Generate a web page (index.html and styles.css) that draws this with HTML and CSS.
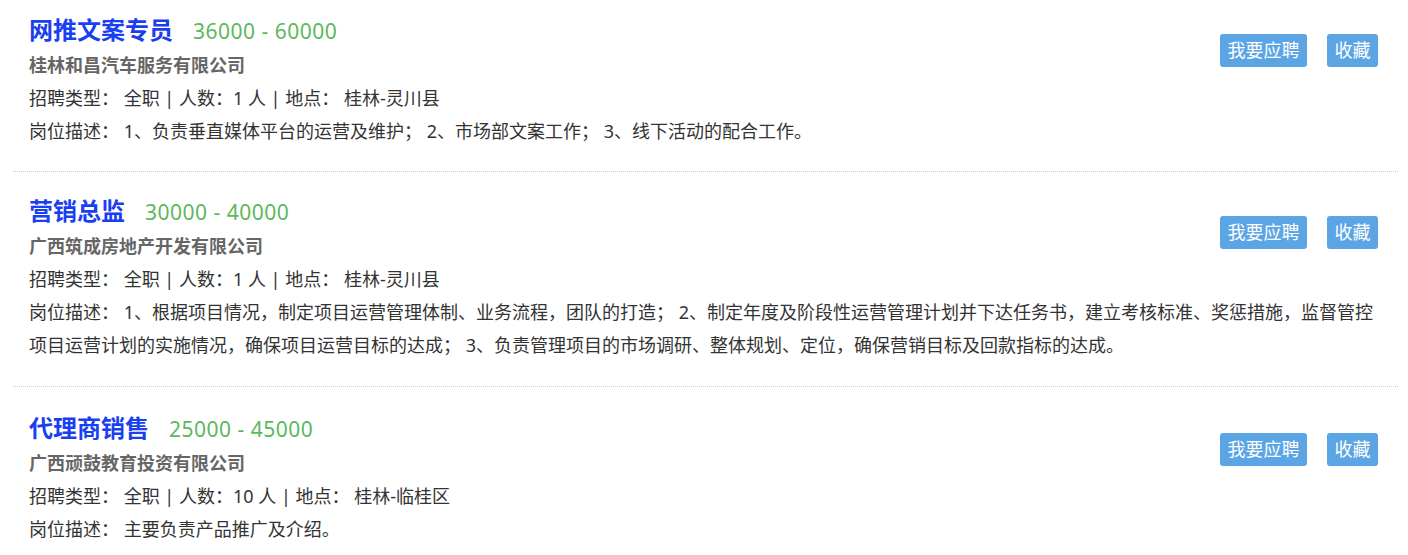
FILE: index.html
```html
<!DOCTYPE html>
<html lang="zh-CN">
<head>
    <meta charset="UTF-8">
    <meta name="viewport" content="width=device-width, initial-scale=1.0">
    <title>招聘信息</title>
    <link rel="stylesheet" href="styles.css">
</head>
<body>
    <!-- 职位列表 -->
    <div class="job-list">
        <div class="job">
            <div class="job-actions">
                <a class="btn" href="#">我要应聘</a>
                <a class="btn" href="#">收藏</a>
            </div>
            <div class="job-title">
                <a class="title" href="#">网推文案专员</a><span class="salary">36000 - 60000</span>
            </div>
            <div class="company">桂林和昌汽车服务有限公司</div>
            <div class="info">招聘类型： 全职 | 人数：1 人 | 地点： 桂林-灵川县</div>
            <div class="desc">岗位描述： 1、负责垂直媒体平台的运营及维护； 2、市场部文案工作； 3、线下活动的配合工作。</div>
        </div>

        <div class="job">
            <div class="job-actions">
                <a class="btn" href="#">我要应聘</a>
                <a class="btn" href="#">收藏</a>
            </div>
            <div class="job-title">
                <a class="title" href="#">营销总监</a><span class="salary">30000 - 40000</span>
            </div>
            <div class="company">广西筑成房地产开发有限公司</div>
            <div class="info">招聘类型： 全职 | 人数：1 人 | 地点： 桂林-灵川县</div>
            <div class="desc">岗位描述： 1、根据项目情况，制定项目运营管理体制、业务流程，团队的打造； 2、制定年度及阶段性运营管理计划并下达任务书，建立考核标准、奖惩措施，监督管控项目运营计划的实施情况，确保项目运营目标的达成； 3、负责管理项目的市场调研、整体规划、定位，确保营销目标及回款指标的达成。</div>
        </div>

        <div class="job">
            <div class="job-actions">
                <a class="btn" href="#">我要应聘</a>
                <a class="btn" href="#">收藏</a>
            </div>
            <div class="job-title">
                <a class="title" href="#">代理商销售</a><span class="salary">25000 - 45000</span>
            </div>
            <div class="company">广西顽鼓教育投资有限公司</div>
            <div class="info">招聘类型： 全职 | 人数：10 人 | 地点： 桂林-临桂区</div>
            <div class="desc">岗位描述： 主要负责产品推广及介绍。</div>
        </div>
    </div>
</body>
</html>
```

FILE: styles.css
```css
* {
    margin: 0;
    padding: 0;
    box-sizing: border-box;
}

body {
    font-family: "Noto Sans", "Noto Sans CJK SC", sans-serif;
    font-size: 18px;
    color: #333;
    background-color: #fff;
}

a {
    text-decoration: none;
}

.job-list {
    padding: 0 10px 0 13px;
}

.job {
    padding: 23px 18px 24px 16px;
    border-bottom: 1px dotted #ccc;
}

.job:first-child {
    padding-top: 14px;
    padding-bottom: 23px;
}

.job:last-child {
    padding-top: 25px;
}

.job-actions {
    float: right;
    display: flex;
    gap: 20px;
    margin: 21px 2px 0 0;
}

.job:first-child .job-actions {
    margin-top: 20px;
}

.btn {
    display: block;
    height: 33px;
    line-height: 33px;
    padding: 0 7.5px;
    background-color: #5ca5e4;
    color: #fff;
    font-size: 18px;
    border-radius: 3px;
}

.job-title {
    height: 35px;
    line-height: 35px;
}

.title, .salary {
    line-height: 1;
    vertical-align: -1px;
}

.title {
    font-size: 24px;
    font-weight: bold;
    color: #1a3ff0;
}

.salary {
    font-size: 21px;
    color: #5cb85c;
    margin-left: 20px;
    letter-spacing: 0.5px;
}

.company {
    line-height: 33px;
    font-weight: bold;
    color: #666;
}

.info, .desc {
    line-height: 33px;
}
```
